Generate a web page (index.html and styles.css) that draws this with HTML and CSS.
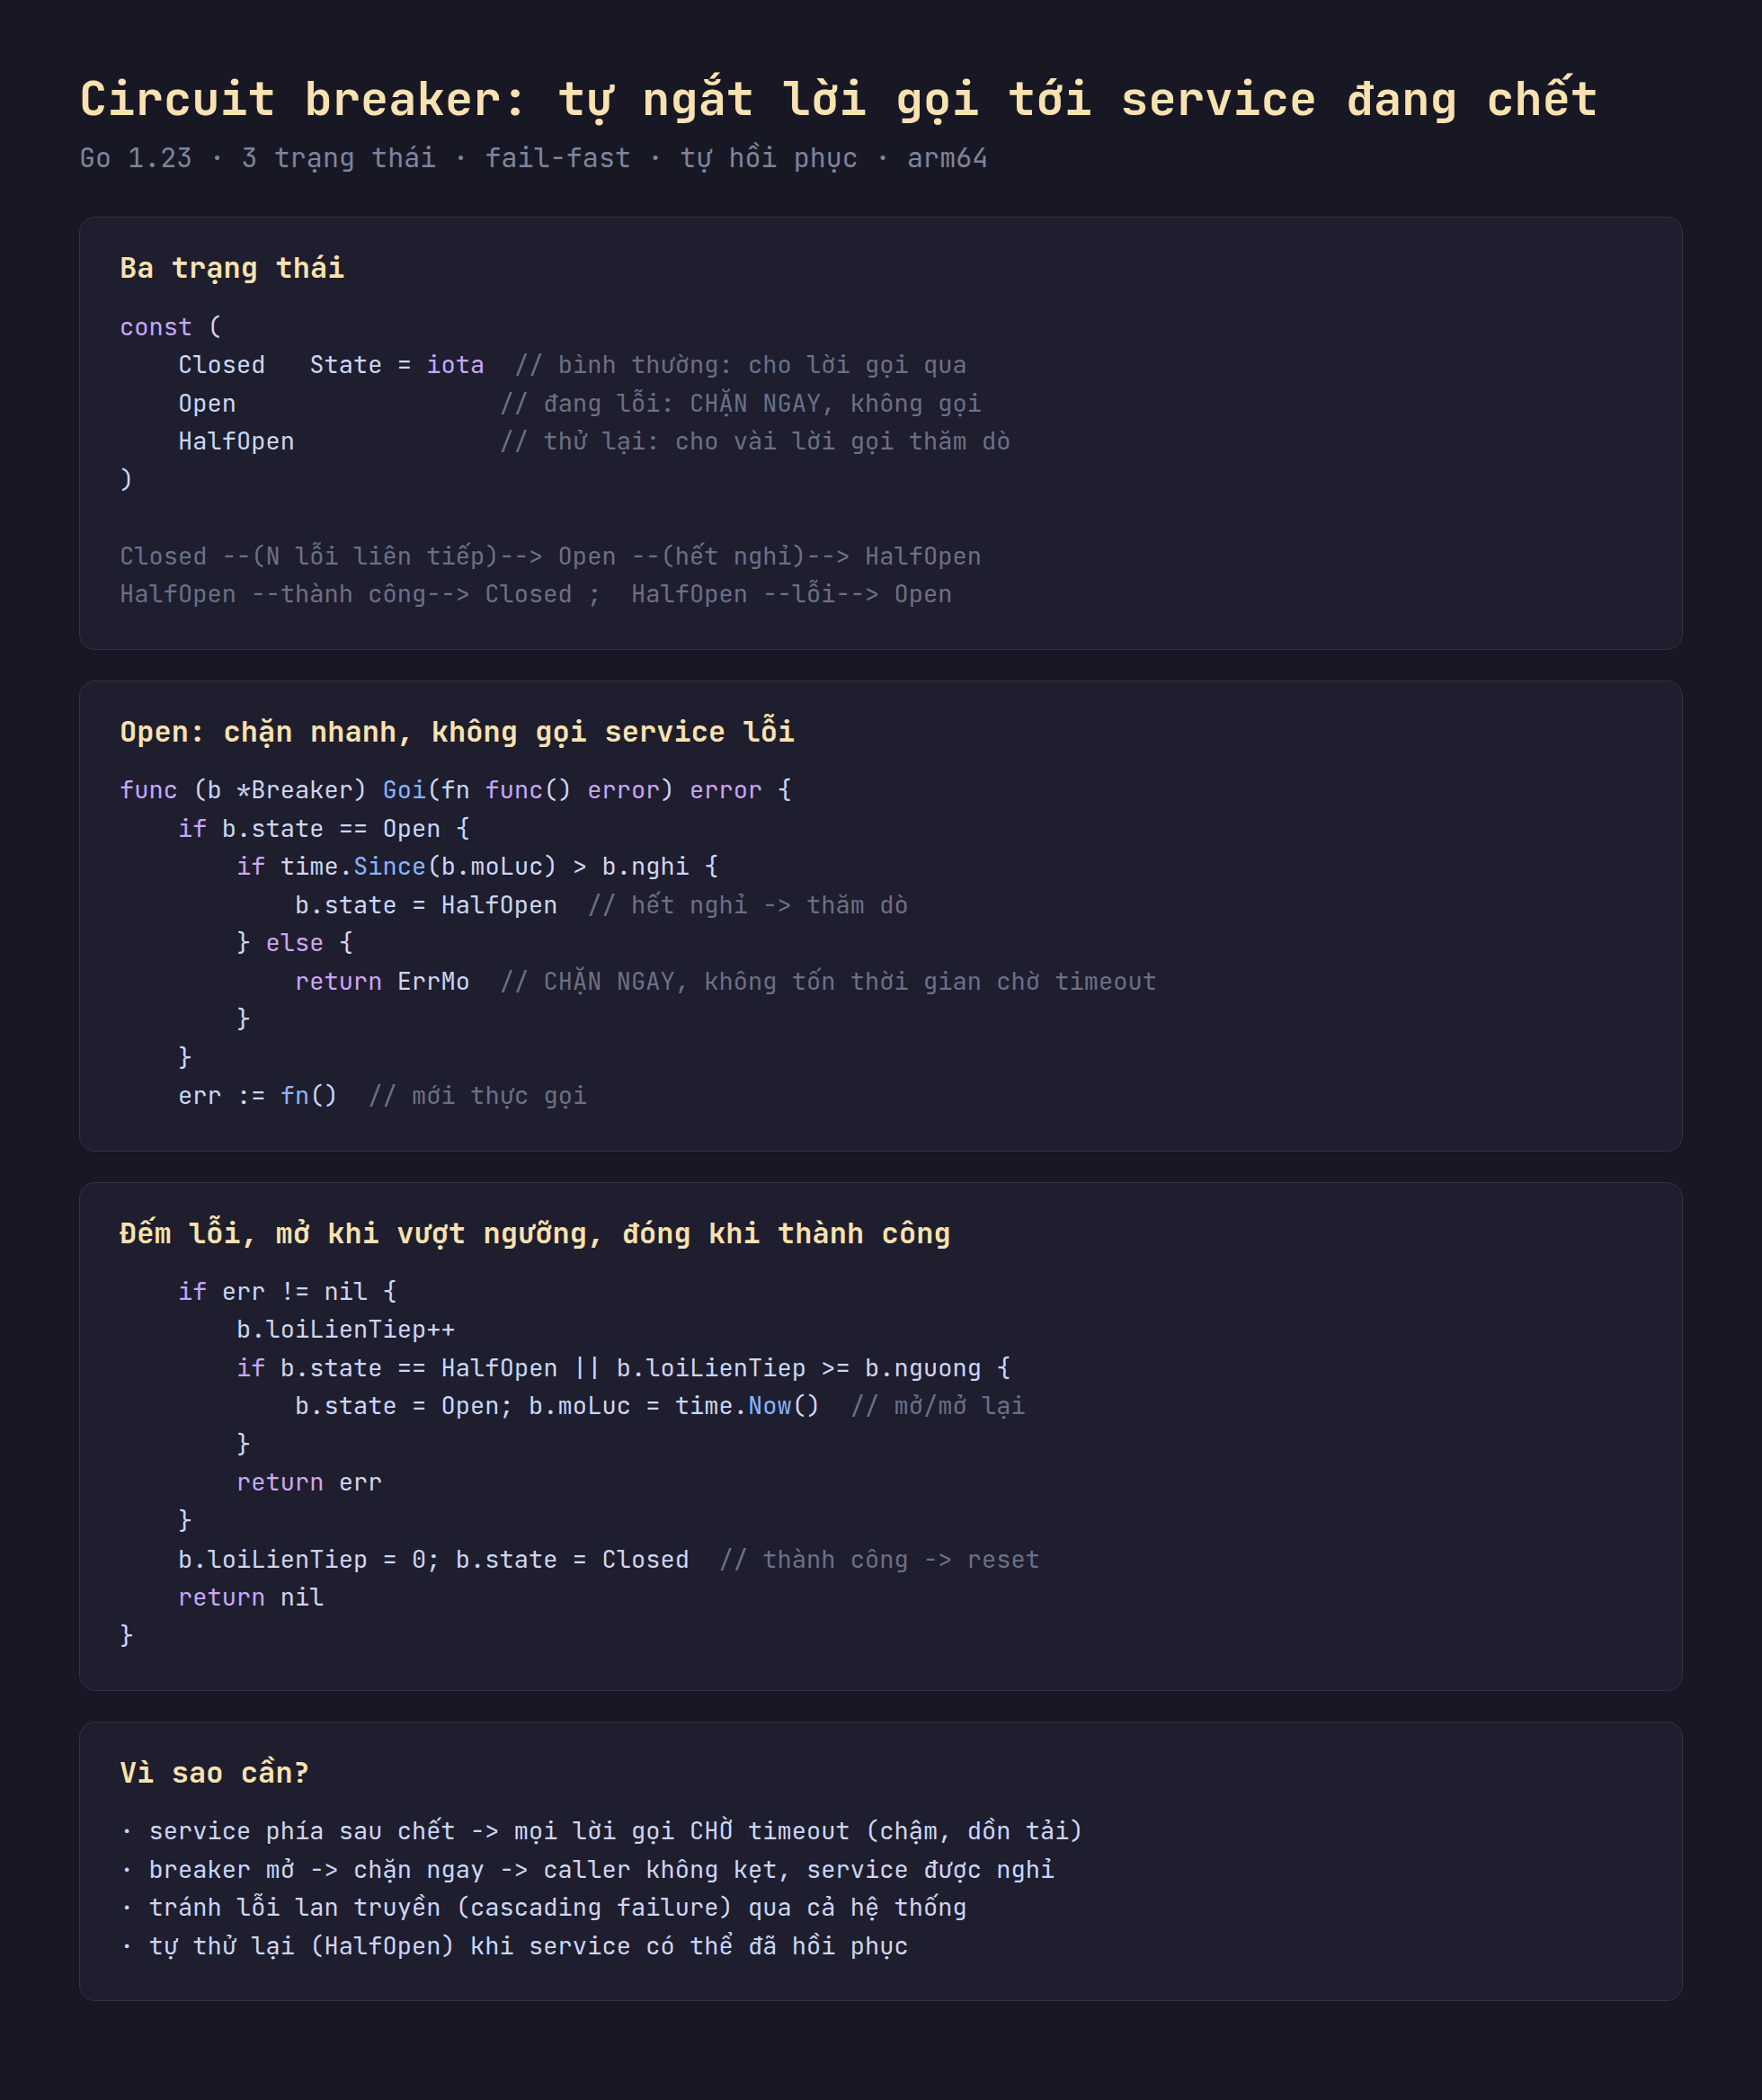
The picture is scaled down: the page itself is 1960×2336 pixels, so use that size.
FILE: index.html
```
<!DOCTYPE html>
<html lang="vi">
<head>
<meta charset="utf-8">
<title>Circuit breaker</title>
<link rel="stylesheet" href="styles.css">
</head>
<body>
<header class="page-head">
  <h1 class="title">Circuit breaker: tự ngắt lời gọi tới service đang chết</h1>
  <p class="subtitle">Go 1.23 · 3 trạng thái · fail-fast · tự hồi phục · arm64</p>
</header>

<section class="card">
  <h2 class="card-title">Ba trạng thái</h2>
<pre class="code"><span class="kw">const</span> (
    Closed   State = <span class="kw">iota</span>  <span class="cm">// bình thường: cho lời gọi qua</span>
    Open                  <span class="cm">// đang lỗi: CHẶN NGAY, không gọi</span>
    HalfOpen              <span class="cm">// thử lại: cho vài lời gọi thăm dò</span>
)

<span class="cm">Closed --(N lỗi liên tiếp)--&gt; Open --(hết nghỉ)--&gt; HalfOpen</span>
<span class="cm">HalfOpen --thành công--&gt; Closed ;  HalfOpen --lỗi--&gt; Open</span></pre>
</section>

<section class="card">
  <h2 class="card-title">Open: chặn nhanh, không gọi service lỗi</h2>
<pre class="code"><span class="kw">func</span> (b *Breaker) <span class="fn">Goi</span>(fn <span class="kw">func</span>() <span class="kw">error</span>) <span class="kw">error</span> {
    <span class="kw">if</span> b.state == Open {
        <span class="kw">if</span> time.<span class="fn">Since</span>(b.moLuc) &gt; b.nghi {
            b.state = HalfOpen  <span class="cm">// hết nghỉ -&gt; thăm dò</span>
        } <span class="kw">else</span> {
            <span class="kw">return</span> ErrMo  <span class="cm">// CHẶN NGAY, không tốn thời gian chờ timeout</span>
        }
    }
    err := <span class="fn">fn</span>()  <span class="cm">// mới thực gọi</span></pre>
</section>

<section class="card">
  <h2 class="card-title">Đếm lỗi, mở khi vượt ngưỡng, đóng khi thành công</h2>
<pre class="code">    <span class="kw">if</span> err != nil {
        b.loiLienTiep++
        <span class="kw">if</span> b.state == HalfOpen || b.loiLienTiep &gt;= b.nguong {
            b.state = Open; b.moLuc = time.<span class="fn">Now</span>()  <span class="cm">// mở/mở lại</span>
        }
        <span class="kw">return</span> err
    }
    b.loiLienTiep = 0; b.state = Closed  <span class="cm">// thành công -&gt; reset</span>
    <span class="kw">return</span> nil
}</pre>
</section>

<section class="card">
  <h2 class="card-title">Vì sao cần?</h2>
  <ul class="reasons">
    <li>· service phía sau chết -&gt; mọi lời gọi CHỜ timeout (chậm, dồn tải)</li>
    <li>· breaker mở -&gt; chặn ngay -&gt; caller không kẹt, service được nghỉ</li>
    <li>· tránh lỗi lan truyền (cascading failure) qua cả hệ thống</li>
    <li>· tự thử lại (HalfOpen) khi service có thể đã hồi phục</li>
  </ul>
</section>
</body>
</html>
```

FILE: styles.css
```
html, body {
  margin: 0;
  background: #181825;
}

body {
  padding: 80px 88px 100px;
  font-family: "JetBrains Mono", "Fira Code", "DejaVu Sans Mono", monospace;
  font-variant-ligatures: none;
  font-feature-settings: "calt" 0, "liga" 0;
  color: #cdd6f4;
}

.page-head {
  margin-bottom: 49px;
}

.title {
  margin: 0;
  font-size: 52px;
  line-height: 1.164;
  letter-spacing: 0.002em;
  font-weight: bold;
  color: #f9e2af;
}

.subtitle {
  margin: 17px 0 0;
  font-size: 30px;
  line-height: 1.164;
  letter-spacing: 0.002em;
  color: #7f849c;
}

.card {
  background: #1e1e2e;
  border: 1px solid #313244;
  border-radius: 18px;
  padding: 37px 44px 40px;
  margin-bottom: 34px;
}

.card-title {
  margin: 0 0 25px;
  font-size: 32px;
  line-height: 1.164;
  letter-spacing: 0.002em;
  font-weight: bold;
  color: #f9e2af;
}

.code {
  margin: 0;
  font-family: inherit;
  font-size: 27px;
  line-height: 1.575;
  letter-spacing: 0.002em;
  color: #cdd6f4;
  white-space: pre;
}

.kw { color: #cba6f7; }
.fn { color: #89b4fa; }
.cm { color: #6c7086; }

.reasons {
  list-style: none;
  margin: 0;
  padding: 0;
  font-size: 27px;
  line-height: 1.575;
  letter-spacing: 0.002em;
  color: #cdd6f4;
}
```
